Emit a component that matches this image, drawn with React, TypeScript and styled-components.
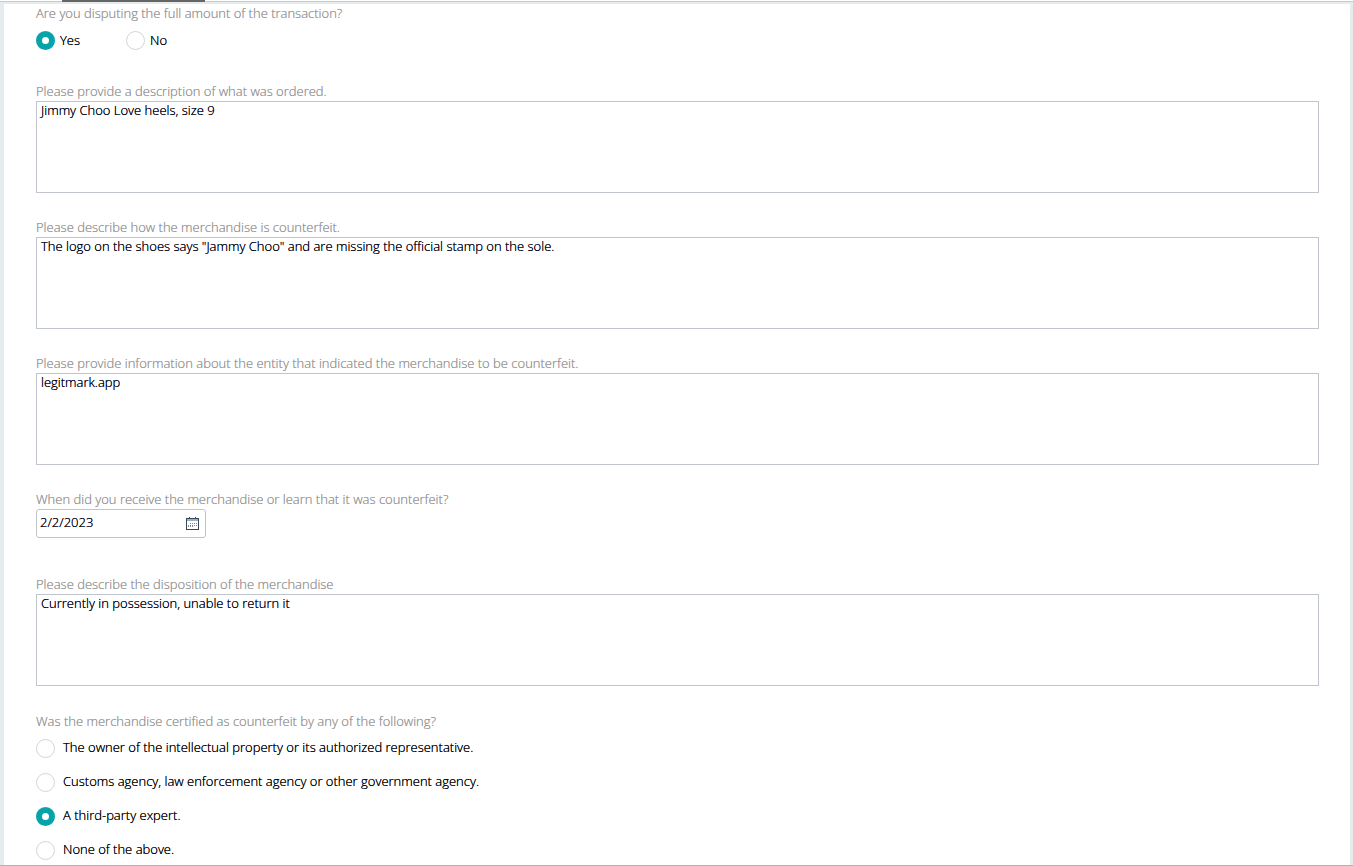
import React, { useState } from "react";
import styled, { createGlobalStyle } from "styled-components";

const GlobalStyle = createGlobalStyle`
  *, *::before, *::after { box-sizing: border-box; }
  body {
    margin: 0;
    background: #e6ecee;
    color: #000000;
    font-family: "Open Sans", "Noto Sans", sans-serif;
    font-size: 13px;
    font-weight: 300;
    line-height: 18px;
    /* Firms up the thin strokes of the light weight. */
    text-shadow: 0 0 0 currentColor;
  }
`;

const Page = styled.div`
  display: flex;
  flex-direction: column;
  min-height: 100vh;
  border-bottom: 1px solid #b0b3b3;
`;

const TabStrip = styled.div`
  height: 4px;
  padding-left: 62px;
  background: linear-gradient(#ffffff 1px, #c6cbce 1px, #c6cbce 2px, #e6ecee 2px);
`;

const ActiveTab = styled.div`
  width: 143px;
  height: 2px;
  background: #666666;
`;

const Form = styled.form`
  flex: 1;
  margin: 0 3px 0 4px;
  padding: 0 31px 4px 32px;
  background: #ffffff;
`;

const Field = styled.div<{ $gap?: number }>`
  display: flex;
  flex-direction: column;
  align-items: flex-start;
  margin-bottom: ${(p) => p.$gap ?? 26}px;
`;

const Label = styled.label`
  padding-bottom: 2px;
  line-height: 16px;
  color: #999999;
  text-shadow: 0 0 0 #999999;
`;

const TextArea = styled.textarea`
  display: block;
  width: 100%;
  height: 92px;
  padding: 0 4px;
  border: 1px solid #c0c5cd;
  border-radius: 0;
  outline: none;
  resize: none;
  background: #ffffff;
  color: #000014;
  font: inherit;
  line-height: 16px;
  text-shadow: 0 0 0 #000014;
`;

const DateBox = styled.div`
  display: flex;
  align-items: center;
  width: 170px;
  height: 29px;
  padding: 0 6px 0 3px;
  border: 1px solid #c0c5cd;
  border-radius: 3px;
`;

const DateInput = styled.input`
  flex: 1;
  min-width: 0;
  height: 24px;
  padding: 0 0 4px;
  border: 0;
  outline: none;
  background: transparent;
  color: #000014;
  font: inherit;
  text-shadow: 0 0 0 #000014;
`;

const CalendarButton = styled.button`
  display: flex;
  padding: 0;
  border: 0;
  background: transparent;
`;

const Group = styled.fieldset<{ $gap: number }>`
  min-width: 0;
  margin: 0 0 ${(p) => p.$gap}px;
  padding: 0;
  border: 0;
`;

const Legend = styled.legend`
  padding: 0;
  color: #999999;
  text-shadow: 0 0 0 #999999;
`;

const Options = styled.div<{ $inline?: boolean }>`
  display: flex;
  flex-direction: ${(p) => (p.$inline ? "row" : "column")};
  gap: ${(p) => (p.$inline ? 0 : 15)}px;
  padding-top: 9px;
`;

const Option = styled.label<{ $inline?: boolean }>`
  display: flex;
  align-items: flex-start;
  gap: ${(p) => (p.$inline ? 5 : 8)}px;
  min-width: 90px;
  height: 19px;
  line-height: ${(p) => (p.$inline ? 18 : 16)}px;
`;

const Radio = styled.input`
  appearance: none;
  flex: none;
  width: 19px;
  height: 19px;
  margin: 0;
  border: 1px solid #d2d5df;
  border-radius: 50%;
  background: #ffffff;

  &:checked {
    border: 6px solid #06a3aa;
  }
`;

function CalendarIcon() {
  return (
    <svg width="13" height="13" viewBox="0 0 13 13" shapeRendering="crispEdges" aria-hidden="true">
      <path d="M0 1h13v12H0z" fill="#34495e" />
      <path d="M1 2h11v2H1z" fill="#a3adb8" />
      <path d="M1 4h11v8H1z" fill="#ffffff" />
      <path d="M3 0h1v2H3zM9 0h1v2H9z" fill="#34495e" />
      <path
        d="M4 6h1v1H4zM6 6h1v1H6zM8 6h1v1H8zM10 6h1v1h-1zM2 8h1v1H2zM4 8h1v1H4zM6 8h1v1H6zM8 8h1v1H8zM10 8h1v1h-1zM2 9h1v1H2zM4 9h1v1H4zM6 9h1v1H6z"
        fill="#7d8a98"
      />
    </svg>
  );
}

function TextField({ id, label, value }: { id: string; label: string; value: string }) {
  return (
    <Field>
      <Label htmlFor={id}>{label}</Label>
      <TextArea id={id} defaultValue={value} spellCheck={false} />
    </Field>
  );
}

interface RadioGroupProps {
  name: string;
  legend: string;
  options: string[];
  initial: string;
  inline?: boolean;
  gap?: number;
}

function RadioGroup({ name, legend, options, initial, inline, gap = 0 }: RadioGroupProps) {
  const [selected, setSelected] = useState(initial);
  return (
    <Group $gap={gap}>
      <Legend>{legend}</Legend>
      <Options $inline={inline}>
        {options.map((option) => (
          <Option key={option} $inline={inline}>
            <Radio
              type="radio"
              name={name}
              value={option}
              checked={selected === option}
              onChange={() => setSelected(option)}
            />
            {option}
          </Option>
        ))}
      </Options>
    </Group>
  );
}

export default function App() {
  return (
    <>
      <GlobalStyle />
      <Page>
        <TabStrip>
          <ActiveTab />
        </TabStrip>
        <Form>
          <RadioGroup
            name="full-amount"
            legend="Are you disputing the full amount of the transaction?"
            options={["Yes", "No"]}
            initial="Yes"
            inline
            gap={33}
          />
          <TextField
            id="description"
            label="Please provide a description of what was ordered."
            value="Jimmy Choo Love heels, size 9"
          />
          <TextField
            id="counterfeit"
            label="Please describe how the merchandise is counterfeit."
            value={'The logo on the shoes says "Jammy Choo" and are missing the official stamp on the sole.'}
          />
          <TextField
            id="entity"
            label="Please provide information about the entity that indicated the merchandise to be counterfeit."
            value="legitmark.app"
          />
          <Field $gap={38}>
            <Label htmlFor="received">When did you receive the merchandise or learn that it was counterfeit?</Label>
            <DateBox>
              <DateInput id="received" type="text" defaultValue="2/2/2023" />
              <CalendarButton type="button" aria-label="Open calendar">
                <CalendarIcon />
              </CalendarButton>
            </DateBox>
          </Field>
          <TextField
            id="disposition"
            label="Please describe the disposition of the merchandise"
            value="Currently in possession, unable to return it"
          />
          <RadioGroup
            name="certified"
            legend="Was the merchandise certified as counterfeit by any of the following?"
            options={[
              "The owner of the intellectual property or its authorized representative.",
              "Customs agency, law enforcement agency or other government agency.",
              "A third-party expert.",
              "None of the above.",
            ]}
            initial="A third-party expert."
          />
        </Form>
      </Page>
    </>
  );
}
